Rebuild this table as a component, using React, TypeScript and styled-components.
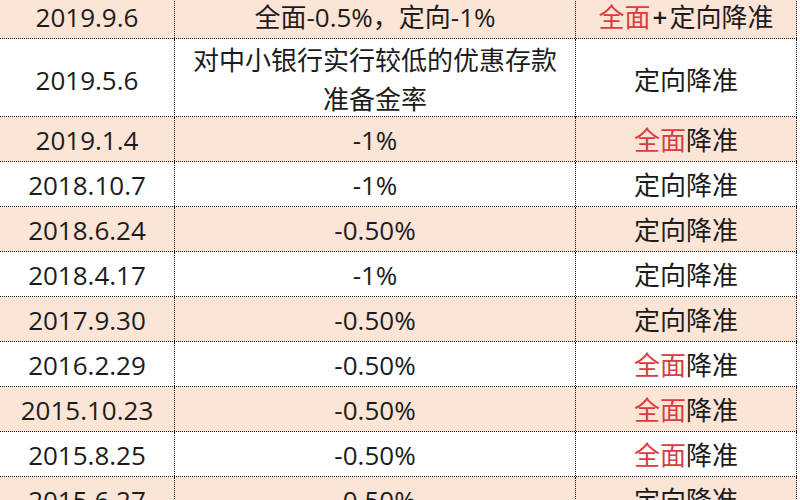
import styled, { createGlobalStyle } from 'styled-components';

const GlobalStyle = createGlobalStyle`
	html, body {
		margin: 0;
		padding: 0;
		background: #ffffff;
		overflow: hidden;
	}
`;

type Cut = {
	date: string;
	ratio: string[];
	kind: 'both' | 'full' | 'target';
	tall?: boolean;
};

const cuts: Cut[] = [
	{ date: '2019.9.6', ratio: ['全面-0.5%，定向-1%'], kind: 'both' },
	{ date: '2019.5.6', ratio: ['对中小银行实行较低的优惠存款', '准备金率'], kind: 'target', tall: true },
	{ date: '2019.1.4', ratio: ['-1%'], kind: 'full' },
	{ date: '2018.10.7', ratio: ['-1%'], kind: 'target' },
	{ date: '2018.6.24', ratio: ['-0.50%'], kind: 'target' },
	{ date: '2018.4.17', ratio: ['-1%'], kind: 'target' },
	{ date: '2017.9.30', ratio: ['-0.50%'], kind: 'target' },
	{ date: '2016.2.29', ratio: ['-0.50%'], kind: 'full' },
	{ date: '2015.10.23', ratio: ['-0.50%'], kind: 'full' },
	{ date: '2015.8.25', ratio: ['-0.50%'], kind: 'full' },
	{ date: '2015.6.27', ratio: ['-0.50%'], kind: 'target' },
];

const App = () => {
	return (
		<>
			<GlobalStyle />
			<Table>
				{cuts.map((cut, i) => (
					<Row key={cut.date} shaded={i % 2 === 0} tall={cut.tall}>
						<Cell>
							<Line>{cut.date}</Line>
						</Cell>
						<Cell>
							{cut.ratio.map((line) => (
								<Line key={line}>{line}</Line>
							))}
						</Cell>
						<Cell>
							<Line>
								{cut.kind === 'target' ? (
									'定向降准'
								) : (
									<>
										<Red>全面</Red>
										{cut.kind === 'both' ? <Plus>+</Plus> : null}
										{cut.kind === 'both' ? '定向降准' : '降准'}
									</>
								)}
							</Line>
						</Cell>
					</Row>
				))}
			</Table>
		</>
	);
};

export default App;

const Table = styled.div`
	display: flex;
	flex-direction: column;
	width: 797px;
	margin-top: -6px;
	font-family: 'Open Sans', 'Noto Sans CJK SC', sans-serif;
	font-size: 26px;
	color: #1c1c1c;
`;

const Row = styled.div<{ shaded: boolean; tall?: boolean }>`
	display: grid;
	grid-template-columns: 175px 401px 221px;
	height: ${({ tall }) => (tall ? '78px' : '45px')};
	flex-shrink: 0;
	box-sizing: border-box;
	border-bottom: 1px dotted #111111;
	background-color: ${({ shaded }) => (shaded ? '#fce4d6' : '#ffffff')};
`;

const Cell = styled.div`
	display: flex;
	flex-direction: column;
	align-items: center;
	justify-content: center;
	box-sizing: border-box;
	border-right: 1px dotted #111111;
	line-height: 39px;
	white-space: nowrap;
	padding-top: 2px;
`;

const Line = styled.span`
	display: block;
`;

const Red = styled.span`
	color: #de3a3f;
`;

const Plus = styled.span`
	margin: 0 2px;
	font-weight: 600;
`;
